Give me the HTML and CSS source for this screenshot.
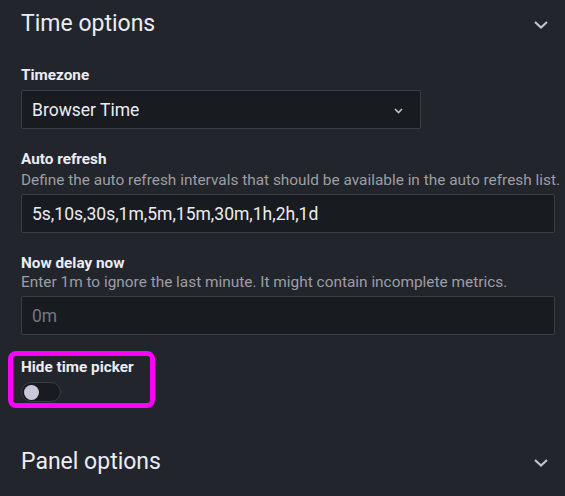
FILE: index.html
```html
<!DOCTYPE html>
<html lang="en">
<head>
<meta charset="utf-8">
<title>Time options</title>
<link rel="stylesheet" href="styles.css">
</head>
<body>
<div class="pane">
  <section class="category">
    <div class="cat-header">
      <h2 class="cat-title">Time options</h2>
      <svg class="cat-chevron" width="14" height="8" viewBox="0 0 14 8"><path d="M1 1 L7 6.5 L13 1" fill="none" stroke="#c2c2d0" stroke-width="2.2" stroke-linejoin="miter"/></svg>
    </div>
    <div class="field field-first">
      <div class="label">Timezone</div>
      <div class="select">
        <span class="select-value">Browser Time</span>
        <svg class="select-chevron" width="9" height="6" viewBox="0 0 9 6"><path d="M1 1 L4.5 4.5 L8 1" fill="none" stroke="#c2c2d0" stroke-width="1.6"/></svg>
      </div>
    </div>
    <div class="field">
      <div class="label">Auto refresh</div>
      <div class="desc">Define the auto refresh intervals that should be available in the auto refresh list.</div>
      <div class="input">5s,10s,30s,1m,5m,15m,30m,1h,2h,1d</div>
    </div>
    <div class="field">
      <div class="label">Now delay now</div>
      <div class="desc desc-tight">Enter 1m to ignore the last minute. It might contain incomplete metrics.</div>
      <div class="input placeholder">0m</div>
    </div>
    <div class="field field-switch">
      <div class="highlight">
        <div class="label">Hide time picker</div>
        <div class="switch"><span class="knob"></span></div>
      </div>
    </div>
  </section>
  <section class="category category-collapsed">
    <div class="cat-header">
      <h2 class="cat-title">Panel options</h2>
      <svg class="cat-chevron" width="14" height="8" viewBox="0 0 14 8"><path d="M1 1 L7 6.5 L13 1" fill="none" stroke="#c2c2d0" stroke-width="2.2" stroke-linejoin="miter"/></svg>
    </div>
  </section>
</div>
</body>
</html>
```

FILE: styles.css
```css
* { box-sizing: border-box; }
html, body {
  margin: 0;
  padding: 0;
  background: #22252b;
}
body {
  font-family: Roboto, "Liberation Sans", sans-serif;
  color: #e4e4ec;
  width: 565px;
  height: 496px;
  overflow: hidden;
}
.pane {
  padding: 0 10px 0 21px;
}
.category {
  display: flex;
  flex-direction: column;
}
.cat-header {
  display: flex;
  align-items: center;
  justify-content: space-between;
  height: 48px;
}
.cat-title {
  margin: 0;
  font-size: 23px;
  font-weight: 400;
  line-height: 28px;
  color: #ececf2;
}
.cat-chevron {
  margin-right: 7px;
  margin-top: 1px;
}
.field {
  display: flex;
  flex-direction: column;
  margin-top: 21px;
}
.field-first {
  margin-top: 18px;
}
.label {
  font-size: 15.3px;
  font-weight: 700;
  line-height: 18px;
  color: #ececf2;
}
.desc {
  font-size: 15.4px;
  line-height: 18px;
  margin-top: 3px;
  color: #9d9ea6;
  white-space: nowrap;
}
.desc-tight {
  margin-top: 1px;
}
.select, .input {
  height: 39px;
  margin-top: 5px;
  background: #181b20;
  border: 1px solid #3b3e45;
  border-radius: 2px;
  display: flex;
  align-items: center;
  padding: 0 10px;
  font-size: 17.5px;
  color: #ececf2;
}
.select {
  width: 400px;
  justify-content: space-between;
  margin-top: 6px;
}
.select-chevron {
  margin-right: 7px;
  margin-top: 2px;
}
.input {
  width: 534px;
  margin-top: 5px;
}
.placeholder {
  color: #75767e;
}
.field-switch {
  margin-top: 16px;
  margin-left: -13px;
}
.highlight {
  width: 147px;
  height: 57px;
  border: 5px solid #ff00ff;
  border-radius: 8px;
  padding: 2px 0 0 8px;
  display: flex;
  flex-direction: column;
}
.switch {
  margin-top: 6px;
  width: 40px;
  height: 20px;
  border-radius: 10px;
  background: #181b20;
  border: 1px solid #3b3e45;
  display: flex;
  align-items: center;
  padding-left: 2px;
}
.knob {
  width: 15px;
  height: 15px;
  border-radius: 50%;
  background: #c9c7da;
}
.category-collapsed {
  margin-top: 30px;
}
```
